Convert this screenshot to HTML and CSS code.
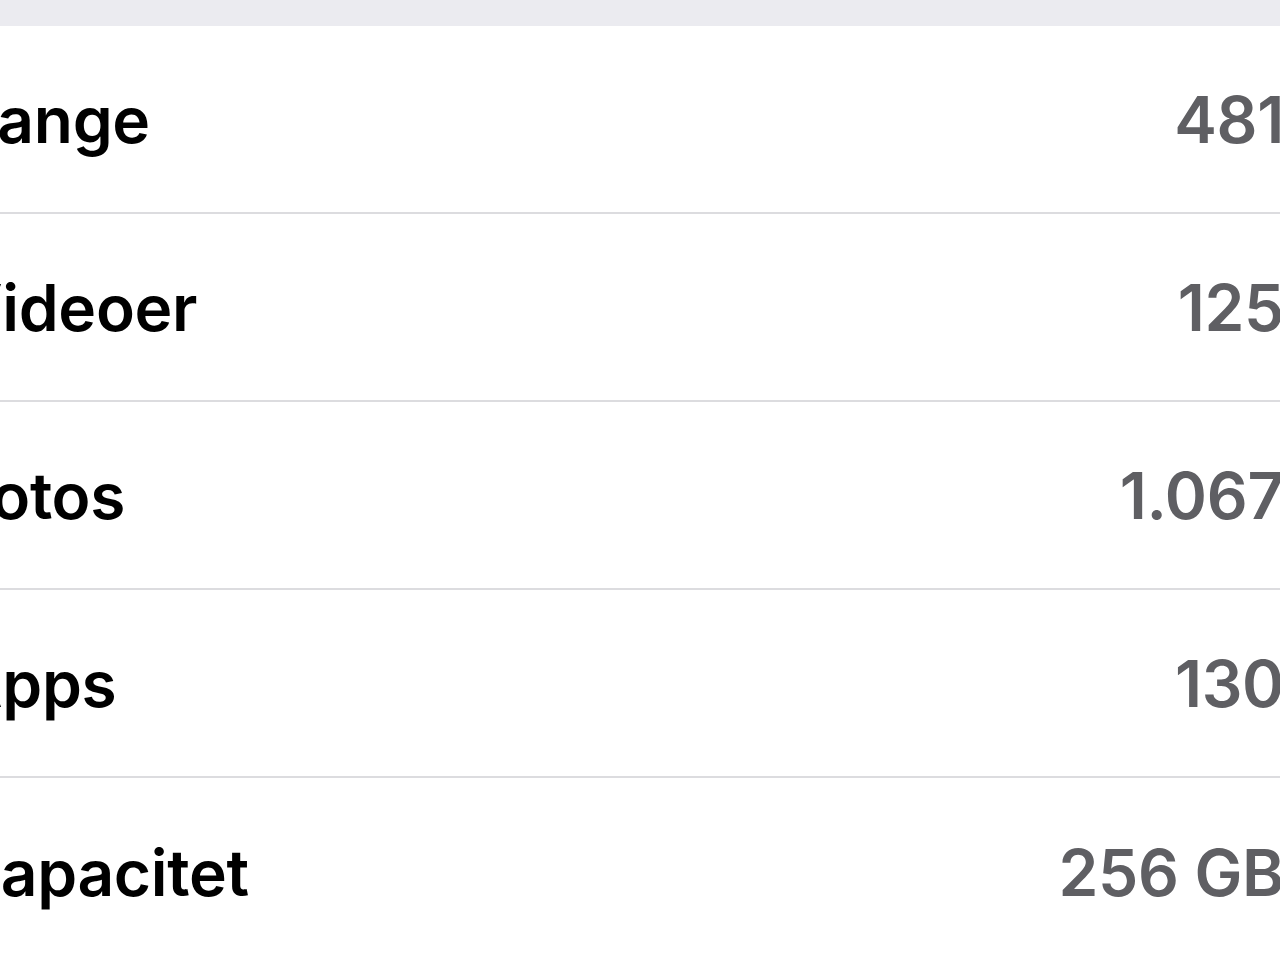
FILE: index.html
```html
<!DOCTYPE html>
<html lang="da">
<head>
<meta charset="utf-8">
<link rel="stylesheet" href="styles.css">
</head>
<body>
<div class="screen">
  <div class="topbar"></div>
  <div class="list">
    <div class="row"><span class="label">Sange</span><span class="value">481</span></div>
    <div class="row"><span class="label">Videoer</span><span class="value">125</span></div>
    <div class="row"><span class="label">Fotos</span><span class="value">1.067</span></div>
    <div class="row"><span class="label">Apps</span><span class="value">130</span></div>
    <div class="row last"><span class="label">Kapacitet</span><span class="value">256 GB</span></div>
  </div>
</div>
</body>
</html>
```
FILE: styles.css
```css
html, body {
  margin: 0;
  padding: 0;
  background: #ffffff;
  overflow: hidden;
}
.screen {
  width: 1280px;
  height: 960px;
  overflow: hidden;
  font-family: "Inter", "Liberation Sans", sans-serif;
}
.topbar {
  height: 26px;
  background: #ebebf0;
}
.list {
  margin-left: -44px;
  margin-right: -4px;
}
.row {
  box-sizing: border-box;
  height: 188px;
  display: flex;
  align-items: center;
  justify-content: space-between;
  border-bottom: 2px solid #dcdcdf;
  font-size: 64px;
  font-weight: 600;
  letter-spacing: -0.3px;
}
.row.last {
  border-bottom: none;
}
.label {
  color: #000000;
}
.value {
  color: #5f5f63;
}
```
